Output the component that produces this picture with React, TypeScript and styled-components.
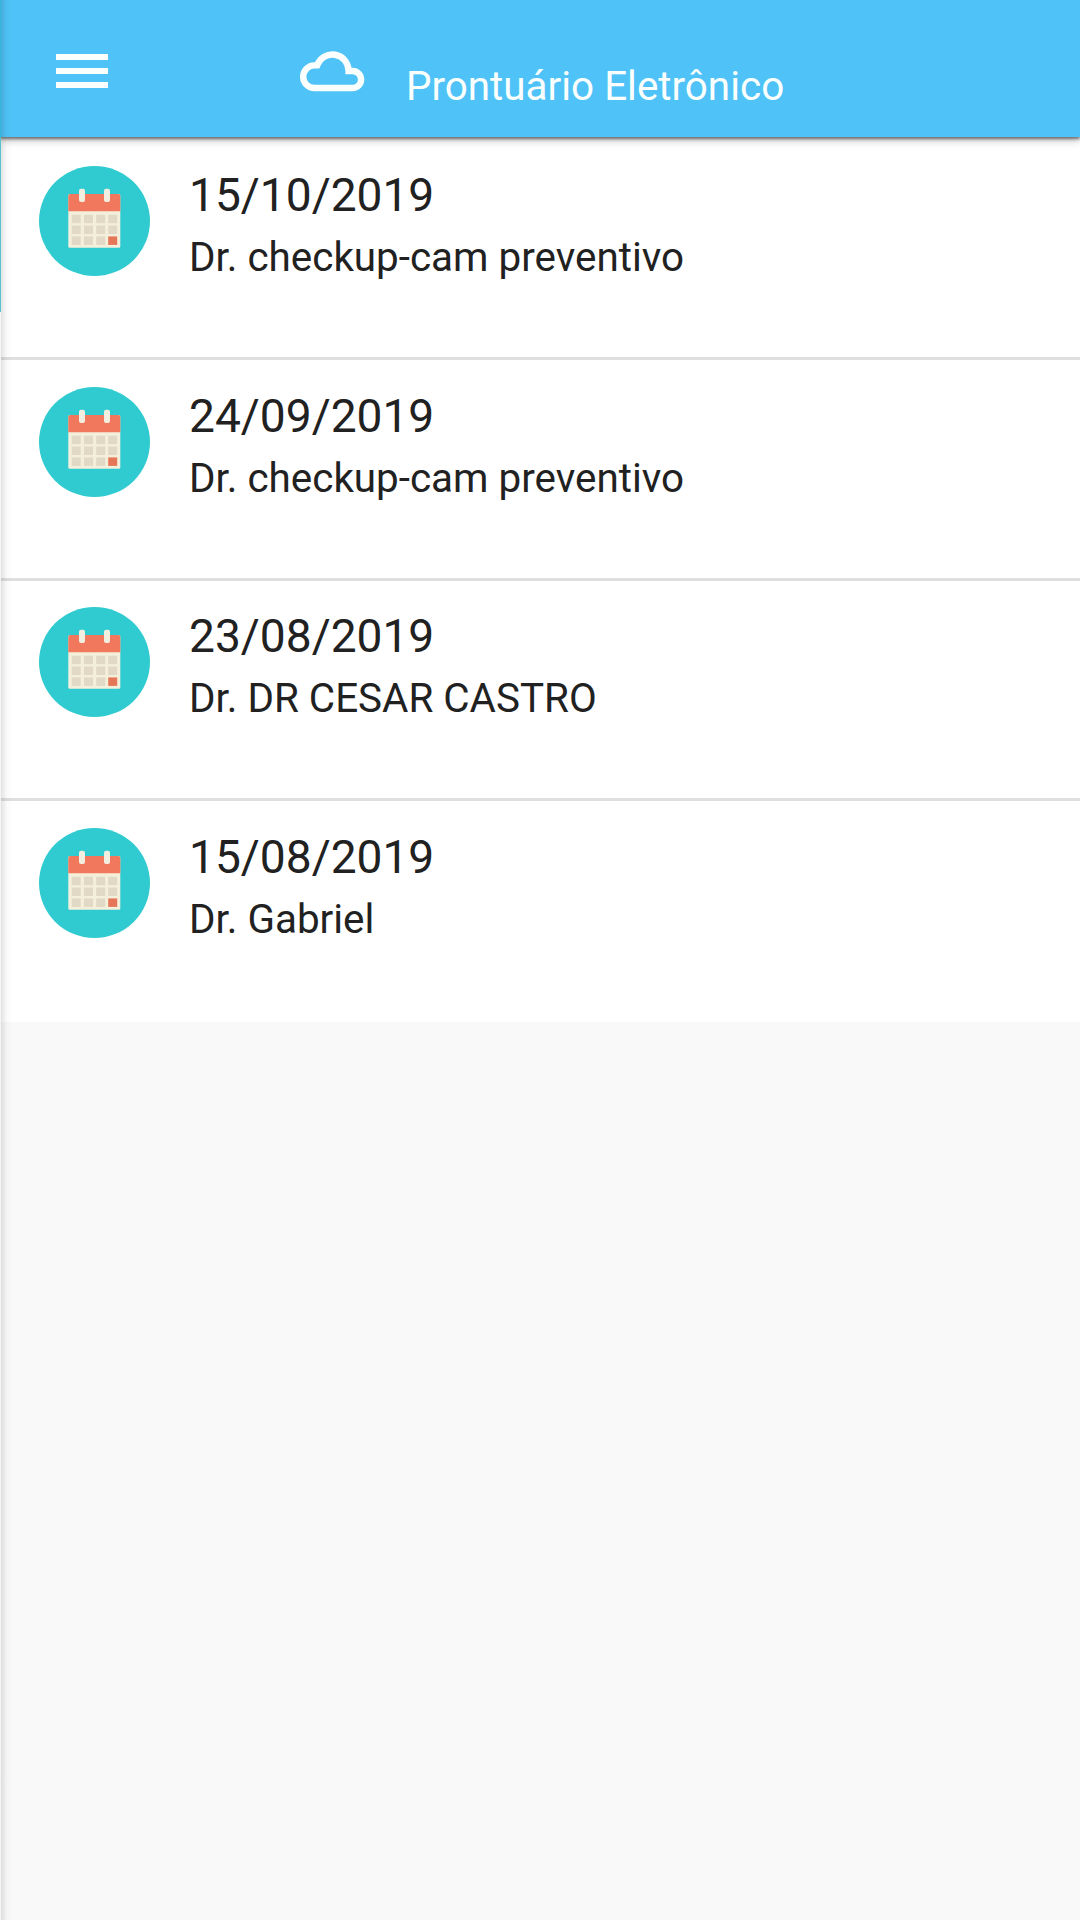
import React from "react";
import styled, { createGlobalStyle } from "styled-components";

const GlobalStyle = createGlobalStyle`
  *, *::before, *::after { box-sizing: border-box; }
  body { margin: 0; background: #f9f9f9; }
`;

const Screen = styled.div`
  position: relative;
  display: flex;
  flex-direction: column;
  min-height: 1920px;
  overflow: hidden;
  background: #f9f9f9;
  color: #212121;
  font-family: Roboto, "Liberation Sans", sans-serif;
`;

const Toolbar = styled.header`
  position: relative;
  z-index: 1;
  display: flex;
  align-items: flex-start;
  height: 137px;
  padding: 36px 0 0 47px;
  background: #4fc3f7;
  color: #fafffe;
  box-shadow: 0 2px 3px rgba(0, 0, 0, 0.5), 0 4px 8px rgba(0, 0, 0, 0.2);
`;

const MenuButton = styled.button`
  display: flex;
  width: 70px;
  height: 70px;
  padding: 0;
  border: 0;
  background: none;
  color: inherit;
`;

const CloudSlot = styled.div`
  display: flex;
  margin: 12px 0 0 180px;
`;

const Title = styled.h1`
  margin: 27px 0 0 39px;
  font-size: 40.4px;
  line-height: 48px;
  font-weight: 400;
  white-space: nowrap;
`;

const List = styled.ul`
  margin: 0;
  padding: 2.33px 0 0;
  list-style: none;
  background: #fff;
`;

const Item = styled.li`
  display: flex;
  gap: 39px;
  height: 220.67px;
  padding: 26.67px 39px 0;
  border-bottom: 3px solid #dfdfdf;

  &:last-child { border-bottom: 0; }
`;

const Details = styled.div`
  display: flex;
  flex-direction: column;
  padding-top: 1px;
`;

const DateText = styled.span`
  font-size: 46.1px;
  line-height: 56px;
`;

const Doctor = styled.span`
  margin-top: 11px;
  font-size: 40.4px;
  line-height: 48px;
  white-space: nowrap;
`;

const DrawerShadow = styled.div`
  position: absolute;
  z-index: 2;
  inset: 0 auto 0 1px;
  width: 12px;
  background: linear-gradient(90deg, rgba(0, 0, 0, 0.11), rgba(0, 0, 0, 0.02) 50%, rgba(0, 0, 0, 0));
`;

const DrawerEdge = styled.div`
  position: absolute;
  z-index: 3;
  inset: 0 auto 0 0;
  width: 1px;
  background: linear-gradient(#35b5da 0 138px, #55c4d0 138px 312px, #f4f4f4 312px);
`;

function MenuIcon() {
  return (
    <svg width="70" height="70" viewBox="0 0 70 70" fill="currentColor" aria-hidden="true">
      <path d="M9 18h52v6H9zM9 32h52v6H9zM9 46h52v6H9z" />
    </svg>
  );
}

function CloudIcon() {
  return (
    <svg width="70" height="46" viewBox="297 48 70 46" fill="none" stroke="currentColor" strokeWidth="6.4" aria-hidden="true">
      <path d="M314.5 88a11.3 11.3 0 0 1 0-22.6h2.6A16.2 16.2 0 0 1 348.6 71h4a8.5 8.5 0 0 1 0 17z" />
    </svg>
  );
}

const cellColumns = [32.7, 45, 57.2, 69.2];
const cellRows = [48.7, 59.5, 70.4];

function CalendarBadge() {
  return (
    <svg width="111" height="110" viewBox="0 0 111 110" aria-hidden="true">
      <ellipse cx="55.5" cy="55" rx="55.5" ry="55" fill="#2fcbd0" />
      <rect x="29.3" y="28" width="52" height="53.7" rx="1.5" fill="#f3efdb" />
      <path d="M29.3 45.3V30a2 2 0 0 1 2-2h48a2 2 0 0 1 2 2v15.3z" fill="#f1785c" />
      <rect x="40" y="22.7" width="6" height="13.3" rx="2" fill="#f3efe0" />
      <rect x="65" y="22.7" width="6" height="13.3" rx="2" fill="#f3efe0" />
      {cellRows.map((y, row) =>
        cellColumns.map((x, column) => (
          <rect
            key={`${row}-${column}`}
            x={x}
            y={y}
            width="9"
            height="8.5"
            fill={row === 2 && column === 3 ? "#e57758" : "#e1d9c6"}
          />
        ))
      )}
    </svg>
  );
}

const records = [
  { date: "15/10/2019", doctor: "Dr. checkup-cam preventivo" },
  { date: "24/09/2019", doctor: "Dr. checkup-cam preventivo" },
  { date: "23/08/2019", doctor: "Dr. DR CESAR CASTRO" },
  { date: "15/08/2019", doctor: "Dr. Gabriel" },
];

export default function App() {
  return (
    <Screen>
      <GlobalStyle />
      <Toolbar>
        <MenuButton aria-label="Menu">
          <MenuIcon />
        </MenuButton>
        <CloudSlot>
          <CloudIcon />
        </CloudSlot>
        <Title>Prontuário Eletrônico</Title>
      </Toolbar>
      <List>
        {records.map((record) => (
          <Item key={record.date}>
            <CalendarBadge />
            <Details>
              <DateText>{record.date}</DateText>
              <Doctor>{record.doctor}</Doctor>
            </Details>
          </Item>
        ))}
      </List>
      <DrawerShadow />
      <DrawerEdge />
    </Screen>
  );
}
